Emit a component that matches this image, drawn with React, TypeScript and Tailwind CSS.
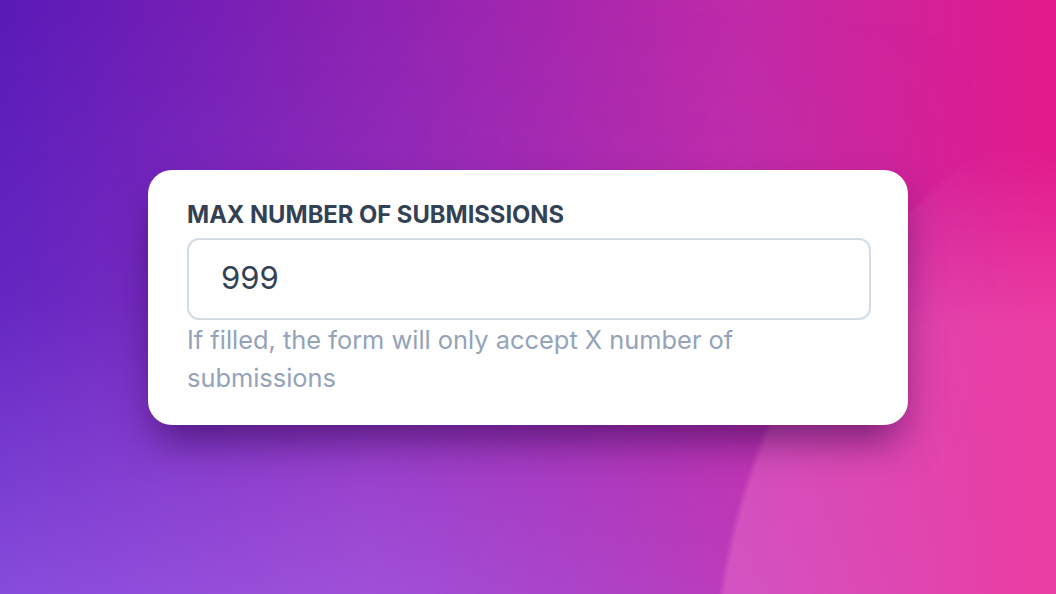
import React from 'react';

export default function App() {
  return (
    <div
      className="relative w-full h-[594px] overflow-hidden flex items-center justify-center font-['Inter',sans-serif] bg-[linear-gradient(to_right,#5a1ab8_0%,#9424b2_40%,#c02aa8_70%,#e31a8c_100%)]"
    >
      {/* soft violet wash towards the bottom left */}
      <div className="absolute inset-0 [mask-image:linear-gradient(to_right,black_35%,transparent_95%)] bg-[linear-gradient(to_bottom,rgba(165,115,255,0)_0%,rgba(165,115,255,0.14)_50%,rgba(180,125,255,0.5)_100%)]" />
      {/* big circle at the bottom right */}
      <div className="absolute inset-0 [mask-image:linear-gradient(to_top,black_45%,transparent_75%)] bg-[radial-gradient(ellipse_690px_700px_at_1400px_700px,rgba(255,130,210,0.34)_99%,rgba(255,130,210,0)_100%)]" />

      <div className="relative w-[760px] bg-white rounded-[24px] pt-[30px] pb-[28px] pl-[39px] pr-[37px] shadow-[0_22px_40px_-8px_rgba(40,0,70,0.6)]">
        <label className="block text-[23.75px] leading-[30px] font-bold text-[#334155] uppercase">
          Max number of submissions
        </label>
        <div className="mt-[8px] h-[82px] rounded-[12px] border-2 border-[#d3dbe5] flex items-center px-[32px]">
          <span className="text-[31px] text-[#334155]">999</span>
        </div>
        <p className="mt-[1px] w-[600px] text-[25.4px] leading-[38px] text-[#94a3b8]">
          If filled, the form will only accept X number of submissions
        </p>
      </div>
    </div>
  );
}
